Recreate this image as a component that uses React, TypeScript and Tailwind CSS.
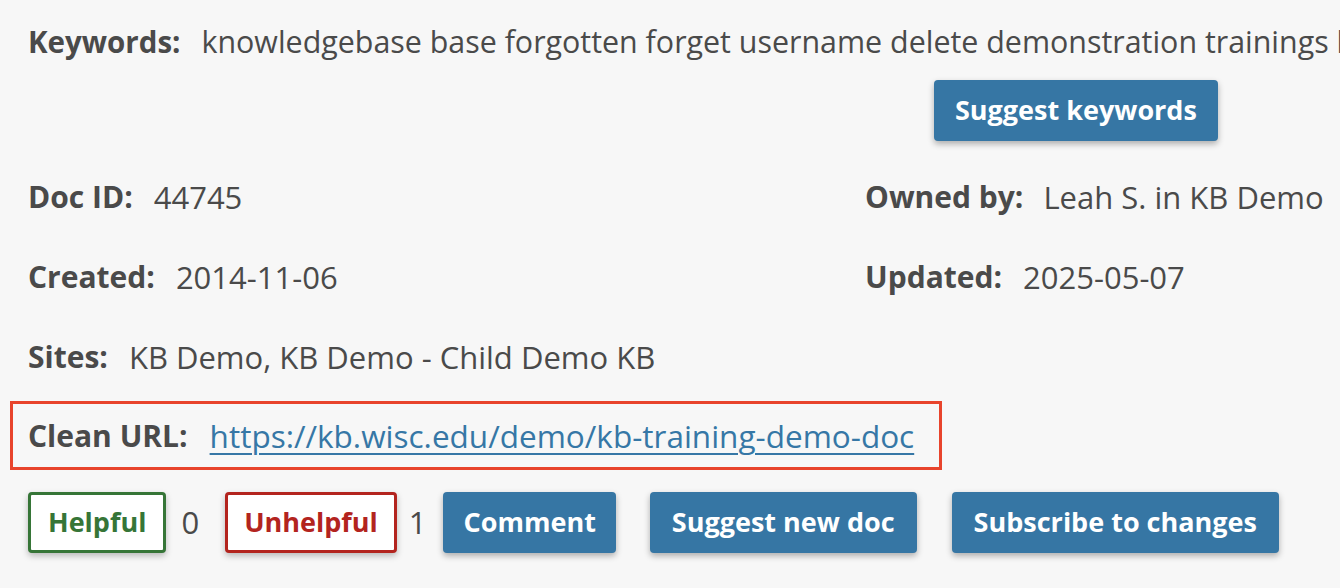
export default function App() {
  const font = { fontFamily: '"Open Sans", "Liberation Sans", sans-serif' };
  return (
    <div className="min-h-[588px] w-[1340px] overflow-hidden bg-[#f7f7f7] text-[31px] text-[#4a4a4a]" style={font}>
      {/* Keywords */}
      <div className="mt-[22px] flex h-[40px] items-center whitespace-nowrap pl-[28px] leading-[40px]">
        <span className="text-[29.5px] font-bold">Keywords:</span>
        <span className="ml-[21px] text-[30.4px]">knowledgebase base forgotten forget username delete demonstration trainings kb</span>
      </div>
      <div className="mt-[18px] pl-[934px]">
        <button className="h-[61px] rounded-[4px] bg-[#3676a4] px-[21px] text-[27px] font-bold text-white shadow-[0_3px_6px_rgba(0,0,0,0.3)]">
          Suggest keywords
        </button>
      </div>

      {/* Meta grid */}
      <div className="mt-[36px] grid grid-cols-[837px_1fr] gap-y-[40px] pl-[28px] leading-[40px]">
        <div className="flex h-[40px] items-center">
          <span className="text-[30px] font-bold">Doc ID:</span>
          <span className="ml-[21px]">44745</span>
        </div>
        <div className="flex h-[40px] items-center whitespace-nowrap">
          <span className="text-[30px] font-bold">Owned by:</span>
          <span className="ml-[20px]">Leah S. in KB Demo</span>
        </div>
        <div className="flex h-[40px] items-center">
          <span className="text-[30px] font-bold">Created:</span>
          <span className="ml-[21px]">2014-11-06</span>
        </div>
        <div className="flex h-[40px] items-center">
          <span className="text-[30px] font-bold">Updated:</span>
          <span className="ml-[21px]">2025-05-07</span>
        </div>
        <div className="col-span-2 flex h-[40px] items-center">
          <span className="text-[30px] font-bold">Sites:</span>
          <span className="ml-[21px]">KB Demo, KB Demo - Child Demo KB</span>
        </div>
      </div>

      {/* Clean URL */}
      <div className="ml-[10px] mt-[24px] flex h-[69px] w-[932px] items-center whitespace-nowrap border-[3px] border-[#e8442c] pl-[15px]">
        <span className="text-[30px] font-bold">Clean URL:</span>
        <a href="#" className="ml-[22px] text-[31.5px] text-[#3677a6] underline decoration-[2px] underline-offset-[5px]">
          https://kb.wisc.edu/demo/kb-training-demo-doc
        </a>
      </div>

      {/* Actions */}
      <div className="mt-[22px] flex items-center pl-[28px]">
        <button className="h-[61px] rounded-[4px] border-[3px] border-[#367537] bg-white px-[17px] text-[27px] font-bold text-[#367537] shadow-[0_3px_6px_rgba(0,0,0,0.25)]">
          Helpful
        </button>
        <span className="ml-[15px] mr-[26px]">0</span>
        <button className="h-[61px] rounded-[4px] border-[3px] border-[#b3241e] bg-white px-[16px] text-[27px] font-bold text-[#b3241e] shadow-[0_3px_6px_rgba(0,0,0,0.25)]">
          Unhelpful
        </button>
        <span className="ml-[12px] mr-[17px]">1</span>
        <button className="h-[61px] rounded-[4px] bg-[#3676a4] px-[20px] text-[27px] font-bold text-white shadow-[0_3px_6px_rgba(0,0,0,0.3)]">
          Comment
        </button>
        <button className="ml-[34px] h-[61px] rounded-[4px] bg-[#3676a4] px-[22px] text-[27px] font-bold text-white shadow-[0_3px_6px_rgba(0,0,0,0.3)]">
          Suggest new doc
        </button>
        <button className="ml-[35px] h-[61px] rounded-[4px] bg-[#3676a4] px-[22px] text-[27px] font-bold text-white shadow-[0_3px_6px_rgba(0,0,0,0.3)]">
          Subscribe to changes
        </button>
      </div>
    </div>
  );
}
